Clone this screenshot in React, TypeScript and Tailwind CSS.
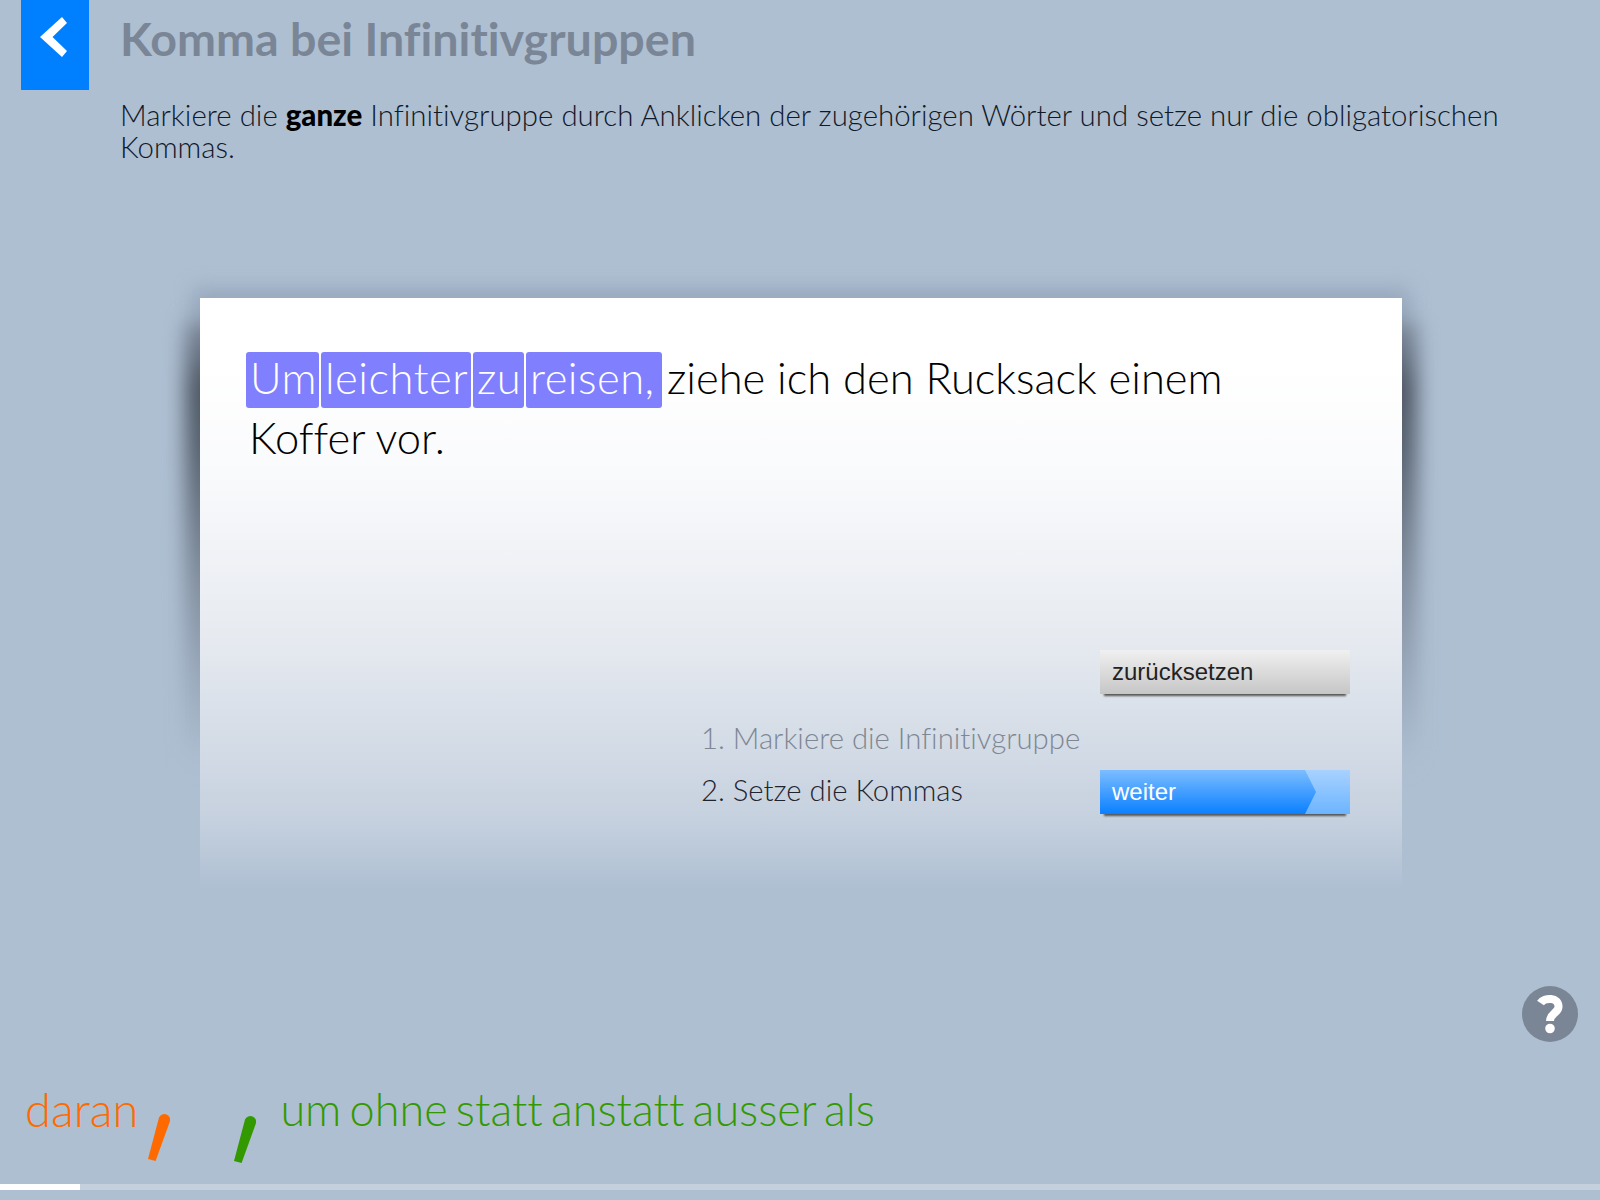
function Word({ children, width }: { children: string; width: string }) {
  return <span className={`inline-block h-[56px] rounded-[3px] bg-[#8080ff] pl-[4px] leading-[50px] tracking-[0.5px] text-white ${width}`}>{children}</span>;
}

function Slash({ color }: { color: string }) {
  return (
    <svg width="22" height="48" viewBox="0 0 22 48" className="shrink-0">
      <path d="M11 4.500A5.800 5.800 0 0 1 21.700 9L7.600 48 0 46Z" fill={color} />
    </svg>
  );
}

export default function App() {
  return (
    <div className="flex h-[1200px] w-[1600px] flex-col overflow-hidden bg-[#aebfd2] font-['Lato','Liberation_Sans',sans-serif] font-light [font-variant-ligatures:none]">
      <header className="flex h-[170px] shrink-0">
        <button className="ml-[21px] flex h-[90px] w-[68px] shrink-0 items-start justify-center bg-[#0080ff] pr-[3px] pt-[17px]">
          <svg width="27" height="40" viewBox="0 0 27 40"><polygon points="22,0 27,6 12.5,20 27,34 22,40 0,20" fill="#fff" /></svg>
        </button>
        <div className="ml-[31px] w-[1400px]">
          <h1 className="mt-[13px] text-[46.6px] leading-[50px] font-bold text-[#7a8696]">Komma bei Infinitivgruppen</h1>
          <p className="mt-[36px] text-[29.43px] leading-[32px] text-[#111827]">
            Markiere die <b className="font-black text-black">ganze</b> Infinitivgruppe durch Anklicken der zugehörigen Wörter und setze nur die obligatorischen Kommas.
          </p>
        </div>
      </header>

      <main className="relative ml-[200px] mt-[128px] h-[592px] w-[1202px] shrink-0">
        <div className="absolute -left-[15px] -right-[15px] top-[18px] h-[450px] rounded-[16px] bg-[linear-gradient(to_bottom,#8391a3_0%,#4d5663_16%,#58626f_30%,#7f8c9c_58%,#aebfd2_100%)] blur-[10px]" />
        <div className="absolute -left-[8px] -right-[8px] -top-[10px] h-[30px] bg-[#8291a8] opacity-50 blur-[10px]" />
        <div className="relative h-full bg-[linear-gradient(to_bottom,#ffffff_0%,#ffffff_12%,#f9fafc_30%,#e6eaf0_58%,#c6d1df_88%,#aebfd2_100%)] pl-[46px] pr-[52px] pt-[54px]">
          <div className="flex flex-wrap items-start gap-x-[2px] gap-y-[4px] text-[43.5px] text-black">
            <Word width="w-[73px]">Um</Word>
            <Word width="w-[150px]">leichter</Word>
            <Word width="w-[51px]">zu</Word>
            <Word width="w-[136px]">reisen,</Word>
            <span className="ml-[3px] h-[56px] leading-[50px]">ziehe ich den Rucksack einem</span>
            <span className="ml-[3px] h-[56px] w-full leading-[50px]">Koffer vor.</span>
          </div>
          <div className="ml-[455px] mt-[182px] flex flex-col text-[29.3px] leading-[34px]">
            <div className="flex justify-end">
              <button className="flex h-[44px] w-[250px] items-center bg-[linear-gradient(to_bottom,#f0f0f0,#c6c6c6)] px-[12px] font-['Liberation_Sans',sans-serif] text-[24px] font-normal text-[#222] shadow-[0_6px_2px_-4px_#555]">zurücksetzen</button>
            </div>
            <div className="mt-[27px] text-[#7f8793]">1. Markiere die Infinitivgruppe</div>
            <div className="mt-[15px] flex items-center justify-between text-[#1f2530]">
              <span className="mb-[5px]">2. Setze die Kommas</span>
              <button className="h-[44px] w-[250px] bg-[linear-gradient(to_bottom,#a8d2ff,#6cb4ff)] font-['Liberation_Sans',sans-serif] text-[24px] font-normal text-white shadow-[0_6px_2px_-4px_#555]">
                <span className="flex h-full w-[216px] items-center bg-[linear-gradient(to_bottom,#7cbdff,#0a80ff)] px-[12px] [clip-path:polygon(0_0,205px_0,216px_50%,205px_100%,0_100%)]">weiter</span>
              </button>
            </div>
          </div>
        </div>
      </main>

      <div className="mr-[22px] mt-[96px] flex h-[56px] shrink-0 justify-end">
        <button className="h-[56px] w-[56px] rounded-full bg-[#7a8696]">
          <svg width="56" height="56" viewBox="0 0 56 56">
            <path d="M18.500 17C22 11.500 37 10.500 36.500 21c-.3 6-8.500 6.500-8.500 14" fill="none" stroke="#fff" strokeWidth="8" />
            <circle cx="28" cy="42.500" r="4.800" fill="#fff" />
          </svg>
        </button>
      </div>

      <div className="ml-[25px] mt-[43px] flex h-[80px] shrink-0 items-start">
        <span className="-mt-[2px] text-[47px] leading-[52px] text-[#ff6a00]">daran</span>
        <span className="ml-[10px] mt-[28px]"><Slash color="#ff6a00" /></span>
        <span className="ml-[64px] mt-[30px]"><Slash color="#339900" /></span>
        <span className="-mt-[2px] ml-[24px] text-[45px] leading-[52px] text-[#339900] [word-spacing:-4px]">um ohne statt anstatt ausser als</span>
      </div>

      <div className="mt-[19px] h-[6px] shrink-0 bg-[#c6d0dc]">
        <div className="h-full w-[80px] bg-white" />
      </div>
    </div>
  );
}
